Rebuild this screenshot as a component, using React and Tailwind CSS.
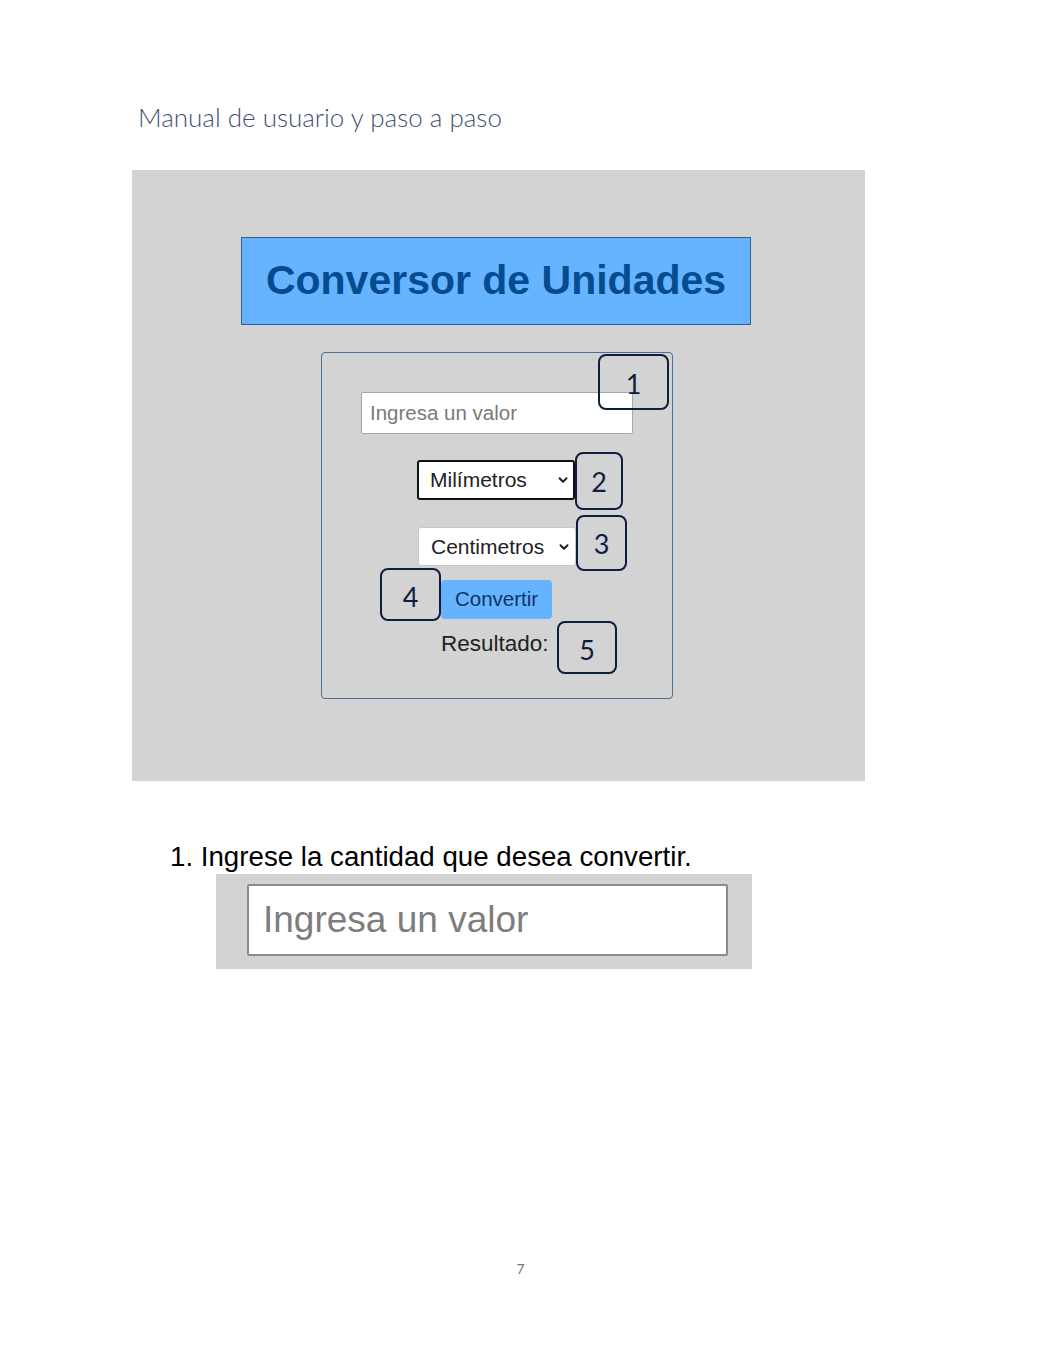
import { ChevronDown } from 'lucide-react'

const UI = '"Liberation Sans", Arial, sans-serif'
const DOC = 'Lato, "Open Sans", sans-serif'

function Callout({ n, className }) {
  return (
    <div
      className={`absolute border-2 border-[#0f1d40] rounded-[8px] flex items-center justify-center text-[27px] text-[#0f1d40] ${className}`}
      style={{ fontFamily: DOC }}
    >
      {n}
    </div>
  )
}

function FakeSelect({ label, className }) {
  return (
    <div className={`flex items-center justify-between bg-white rounded-[3px] ${className}`}>
      <span className="text-[21px] text-[#222]">{label}</span>
      <ChevronDown size={14} strokeWidth={3.5} className="text-[#222]" />
    </div>
  )
}

export default function App() {
  return (
    <div className="relative w-full h-[1355px] bg-white flex flex-col overflow-hidden">
      {/* Document heading */}
      <h1
        className="ml-[138px] mt-[100px] text-[26px] leading-[34px] font-light text-[#3e5270]"
        style={{ fontFamily: DOC }}
      >
        Manual de usuario y paso a paso
      </h1>

      {/* Screenshot of the app */}
      <div className="ml-[132px] mt-[36px] w-[733px] h-[611px] bg-[#d3d3d3] flex flex-col" style={{ fontFamily: UI }}>
        <div className="ml-[109px] mt-[67px] w-[510px] h-[88px] bg-[#66b3ff] border border-[#2f5f8f] flex items-center justify-center">
          <span className="text-[41px] font-bold text-[#054b8f]">Conversor de Unidades</span>
        </div>

        <div className="relative ml-[189px] mt-[27px] w-[352px] h-[347px] border border-[#4d6d94] rounded-[4px] flex flex-col">
          <div className="ml-[39px] mt-[39px] w-[272px] h-[42px] bg-white border border-[#a8a8a8] rounded-[2px] flex items-center px-[8px]">
            <span className="text-[20.5px] text-[#7a7a7a]">Ingresa un valor</span>
          </div>

          <FakeSelect label="Milímetros" className="ml-[95px] mt-[26px] w-[158px] h-[40px] border-2 border-[#111] pl-[11px] pr-[3px]" />
          <FakeSelect label="Centimetros" className="ml-[96px] mt-[27px] w-[158px] h-[39px] border border-[#c8c8c8] pl-[12px] pr-[4px]" />

          <div className="ml-[119px] mt-[14px] w-[111px] h-[39px] bg-[#66b3ff] rounded-[4px] flex items-center pl-[14px]">
            <span className="text-[20.5px] text-[#0d3566]">Convertir</span>
          </div>

          <div className="ml-[119px] mt-[12px] text-[22.5px] leading-[26px] text-[#222]">Resultado:</div>

          <Callout n="1" className="left-[276px] top-[1px] w-[71px] h-[56px] items-end pb-[4px]" />
          <Callout n="2" className="left-[253px] top-[99px] w-[48px] h-[58px] pt-[2px]" />
          <Callout n="3" className="left-[254px] top-[162px] w-[51px] h-[56px] pt-[3px]" />
          <Callout n="4" className="left-[58px] top-[215px] w-[61px] h-[53px] pt-[6px]" />
          <Callout n="5" className="left-[235px] top-[268px] w-[60px] h-[53px] pt-[6px]" />
        </div>
      </div>

      {/* Step 1 */}
      <p className="ml-[170px] mt-[60px] text-[27.7px] leading-[32px] text-black" style={{ fontFamily: UI }}>
        1. Ingrese la cantidad que desea convertir.
      </p>
      <div className="ml-[216px] mt-[1px] w-[536px] h-[95px] bg-[#d3d3d3] flex items-start" style={{ fontFamily: UI }}>
        <div className="ml-[31px] mt-[10px] w-[481px] h-[72px] bg-white border-2 border-[#8a8a8a] rounded-[2px] flex items-center px-[14px]">
          <span className="text-[37px] text-[#7d7d7d]">Ingresa un valor</span>
        </div>
      </div>

      {/* Page number */}
      <div className="mt-[289px] text-center text-[14px] text-[#777]" style={{ fontFamily: DOC }}>
        7
      </div>
    </div>
  )
}
